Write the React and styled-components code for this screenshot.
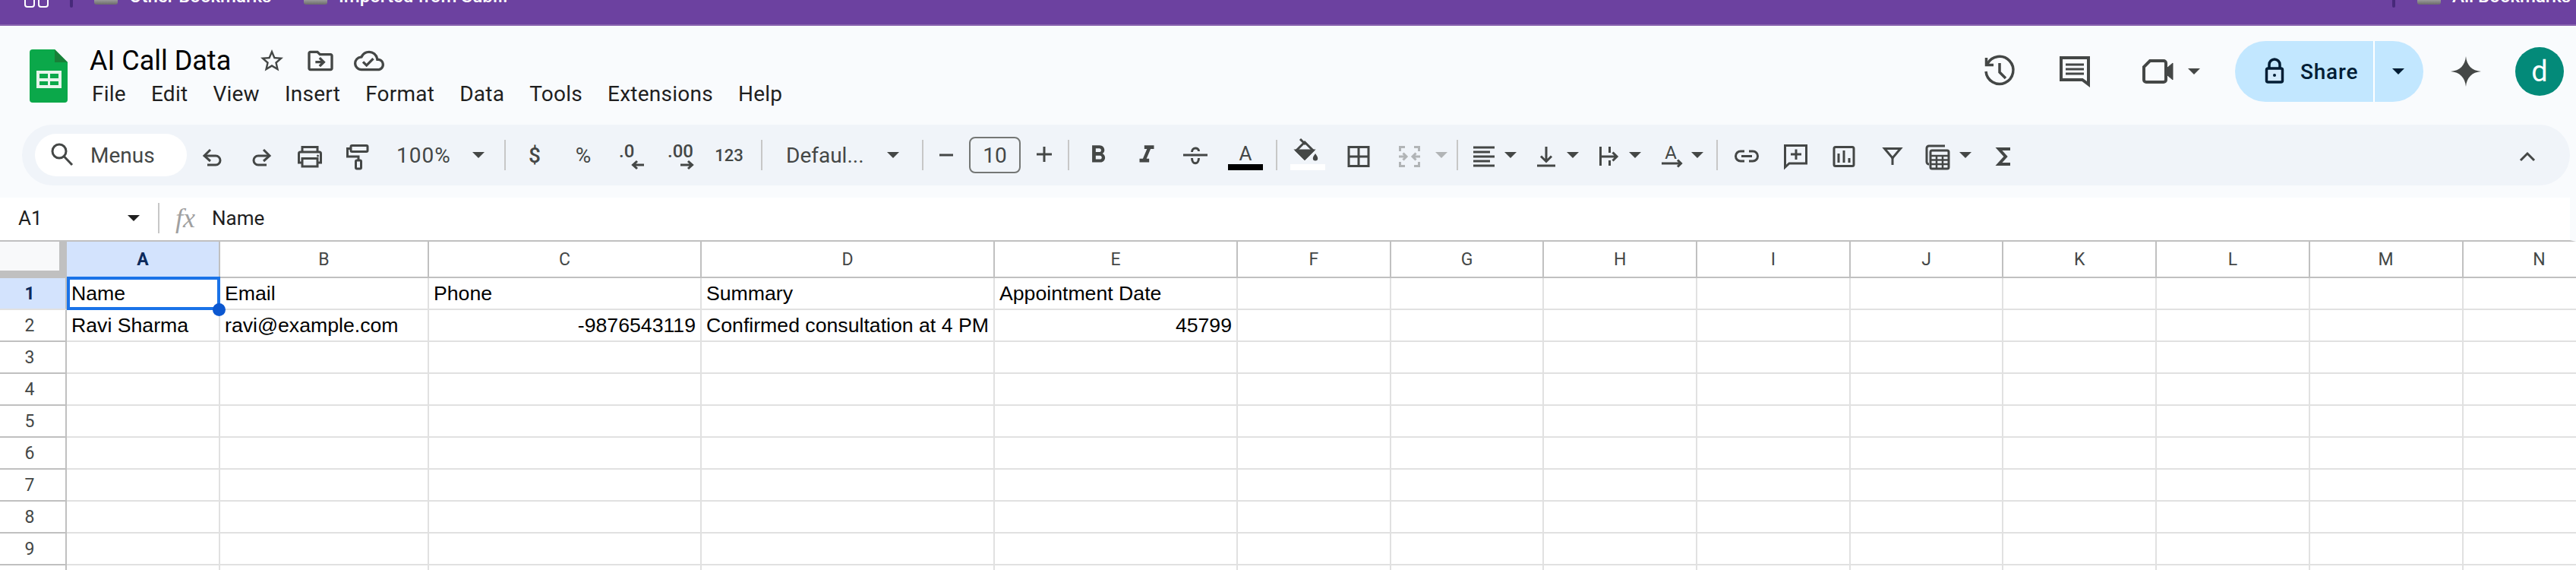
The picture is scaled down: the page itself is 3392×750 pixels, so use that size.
import React from 'react';
import styled, { createGlobalStyle } from 'styled-components';
import { MdStarBorder, MdOutlineDriveFileMove, MdOutlineCloudDone, MdFormatBold, MdFormatItalic } from 'react-icons/md';

const GlobalStyle = createGlobalStyle`
    html, body {
        margin: 0;
        padding: 0;
        width: 3392px;
        height: 750px;
        overflow: hidden;
        background: #fff;
        font-family: Roboto, "Liberation Sans", sans-serif;
    }
    * { box-sizing: border-box; }
`;

const Page = styled.div`
    width: 3392px;
    height: 750px;
    overflow: hidden;
    display: flex;
    flex-direction: column;
`;

/* browser bookmarks strip, only the bottom of it is in the shot */
const BookmarkBar = styled.div`
    height: 34px;
    flex: none;
    display: flex;
    align-items: flex-start;
    padding-left: 32px;
    overflow: hidden;
    background: #6c41a0;
    border-bottom: 2px solid #8a65b0;
`;
const BarDivider = styled.span`
    width: 4px;
    height: 10px;
    flex: none;
    margin-left: ${(p) => p.$ml || 0}px;
    border-radius: 0 0 2px 2px;
    background: #47297a;
`;
const BookmarkItem = styled.div`
    display: flex;
    align-items: flex-start;
    flex: none;
    gap: 15px;
    width: ${(p) => (p.$w ? `${p.$w}px` : 'auto')};
    margin-left: ${(p) => p.$ml || 0}px;
`;
const BookmarkFolder = styled.span`
    width: 31px;
    height: 6px;
    flex: none;
    border-radius: 0 0 3px 3px;
    background: linear-gradient(#9a9a9a, #6b6b6b);
`;
const BookmarkText = styled.span`
    margin-top: -18px;
    color: #fff;
    font-size: 24px;
    font-weight: 500;
    line-height: 26px;
    white-space: nowrap;
`;
const BarRight = styled.div`
    margin-left: auto;
    width: 242px;
    flex: none;
    display: flex;
    align-items: flex-start;
`;

const Header = styled.div`
    flex: none;
    height: 226px;
    background: #f9fbfd;
`;
const TopRow = styled.div`
    height: 130px;
    display: flex;
    align-items: flex-start;
    padding: 0 16px 0 39px;
`;
const Logo = styled.svg`
    width: 50px;
    height: 70px;
    flex: none;
    margin-top: 31px;
`;
const TitleBlock = styled.div`
    margin: 24px 0 0 29px;
`;
const TitleRow = styled.div`
    display: flex;
    align-items: center;
    height: 44px;
`;
const Title = styled.div`
    width: 208px;
    color: #000;
    font-size: 36px;
    line-height: 44px;
    white-space: nowrap;
`;
const TitleIcon = styled.span`
    width: 64px;
    display: flex;
    align-items: center;
    justify-content: center;
    color: #444746;
`;
const MenuBar = styled.div`
    display: flex;
    gap: 33px;
    margin: 4px 0 0 3px;
    color: #1f1f1f;
    font-size: 28px;
    letter-spacing: 0.25px;
    line-height: 36px;
`;
const HeaderRight = styled.div`
    margin-left: auto;
    margin-top: 20px;
    height: 80px;
    display: flex;
    align-items: center;
    color: #444746;
`;
const HeadIcon = styled.span`
    width: 48px;
    height: 48px;
    flex: none;
    display: flex;
    margin-left: ${(p) => p.$ml || 0}px;
`;
const SharePill = styled.div`
    width: 248px;
    height: 80px;
    flex: none;
    margin-left: ${(p) => p.$ml || 0}px;
    display: flex;
    border-radius: 40px;
    overflow: hidden;
    background: #c2e7ff;
    color: #001d35;
`;
const ShareMain = styled.div`
    width: 182px;
    display: flex;
    align-items: center;
    padding-left: 28px;
    gap: 10px;
    font-size: 28px;
    font-weight: 500;
    letter-spacing: 0.8px;
`;
const ShareMore = styled.div`
    flex: 1;
    display: flex;
    align-items: center;
    justify-content: center;
    padding-right: 2px;
    border-left: 2px solid #fff;
`;
const Avatar = styled.div`
    width: 64px;
    height: 64px;
    flex: none;
    margin-left: ${(p) => p.$ml || 0}px;
    display: flex;
    align-items: center;
    justify-content: center;
    border-radius: 50%;
    background: #038a79;
    color: #fff;
    font-size: 38px;
`;

const Toolbar = styled.div`
    height: 80px;
    margin: 0 8px 0 29px;
    padding: 0 24px 0 17px;
    display: flex;
    align-items: center;
    border-radius: 40px;
    background: #f0f4f9;
    color: #444746;
`;
const SearchPill = styled.div`
    width: 200px;
    height: 56px;
    flex: none;
    display: flex;
    align-items: center;
    padding-left: 10px;
    gap: 15px;
    margin-right: 2px;
    border-radius: 28px;
    background: #fff;
    font-size: 28px;
`;
const ToolButton = styled.div`
    width: ${(p) => p.$w || 64}px;
    height: 56px;
    flex: none;
    margin-left: ${(p) => p.$ml || 0}px;
    display: flex;
    align-items: center;
    justify-content: center;
    color: ${(p) => (p.$disabled ? '#b1b4b6' : 'inherit')};
    font-size: ${(p) => p.$size || 28}px;
    font-weight: ${(p) => p.$weight || 400};
`;
const TextSelect = styled.div`
    width: ${(p) => p.$w}px;
    height: 56px;
    flex: none;
    display: flex;
    align-items: center;
    justify-content: space-between;
    padding: 0 ${(p) => p.$pr}px 0 ${(p) => p.$pl}px;
    font-size: 28px;
    letter-spacing: ${(p) => p.$ls || 0}px;
    white-space: nowrap;
`;
const FontSizeBox = styled.div`
    width: 68px;
    height: 48px;
    flex: none;
    display: flex;
    align-items: center;
    justify-content: center;
    border: 2px solid #747775;
    border-radius: 8px;
    font-size: 28px;
`;
const Sep = styled.span`
    width: 2px;
    height: 40px;
    flex: none;
    margin: 0 ${(p) => p.$r || 0}px 0 ${(p) => p.$l || 0}px;
    background: #c7c7c7;
`;
const ToolbarSpacer = styled.span`
    flex: 1;
`;
const Caret = styled.span`
    width: 0;
    height: 0;
    flex: none;
    border-left: 8px solid transparent;
    border-right: 8px solid transparent;
    border-top: 8px solid ${(p) => p.$color || 'currentColor'};
`;
const CaretSlot = styled.span`
    width: ${(p) => p.$w || 18}px;
    flex: none;
    margin-left: ${(p) => p.$ml || 0}px;
    margin-right: ${(p) => p.$mr || 0}px;
    display: flex;
    justify-content: center;
`;
const Icon = styled.svg.attrs({ viewBox: '0 0 48 48', width: 48, height: 48, fill: 'none' })`
    flex: none;
    display: block;
    overflow: visible;
    stroke: currentColor;
    stroke-width: ${(p) => p.$sw || 3};
`;
const IconLabel = styled.text`
    fill: currentColor;
    stroke: none;
    font-family: Roboto, sans-serif;
    font-size: ${(p) => p.$size || 24}px;
    font-weight: ${(p) => p.$weight || 400};
`;

const FormulaBar = styled.div`
    flex: none;
    height: 58px;
    display: flex;
    align-items: center;
    padding-bottom: 2px;
    background: #fff;
    border-bottom: 2px solid #c0c0c0;
    border-right: 8px solid #f9fbfd;
`;
const NameBox = styled.div`
    width: 208px;
    flex: none;
    padding: 0 24px;
    display: flex;
    align-items: center;
    justify-content: space-between;
    color: #1f1f1f;
    font-size: 26px;
`;
const Fx = styled.span`
    margin-left: 21px;
    width: 48px;
    color: #a0a0a0;
    font-family: "Liberation Serif", serif;
    font-size: 36px;
    font-style: italic;
    line-height: 1;
`;
const FormulaText = styled.span`
    color: #1f1f1f;
    font-size: 26px;
`;

const Sheet = styled.div`
    flex: 1;
    overflow: hidden;
    display: grid;
    grid-template-columns: 88px 202px 275px 359px 386px 320px repeat(9, 201.7px);
    grid-auto-rows: 42px;
    grid-template-rows: 48px;
`;
const Corner = styled.div`
    background: #f8f9fa;
    border-right: 10px solid #c0c0c0;
    border-bottom: 10px solid #c0c0c0;
`;
const ColHead = styled.div`
    display: flex;
    align-items: center;
    justify-content: center;
    background: ${(p) => (p.$active ? '#d3e3fd' : '#fff')};
    color: ${(p) => (p.$active ? '#0b2a5c' : '#444746')};
    font-size: 23px;
    font-weight: ${(p) => (p.$active ? 700 : 400)};
    border-right: 2px solid #c0c0c0;
    border-bottom: 2px solid #c0c0c0;
`;
const RowHead = styled.div`
    display: flex;
    align-items: center;
    justify-content: center;
    padding-right: 8px;
    background: ${(p) => (p.$active ? '#d3e3fd' : '#fff')};
    color: ${(p) => (p.$active ? '#0b2a5c' : '#444746')};
    font-size: 23px;
    font-weight: ${(p) => (p.$active ? 700 : 400)};
    border-right: 2px solid #c0c0c0;
    border-bottom: 2px solid ${(p) => (p.$active ? '#e1e1e1' : '#c0c0c0')};
`;
const Cell = styled.div`
    position: relative;
    padding: 0 6px;
    overflow: visible;
    color: #000;
    font-family: "Liberation Sans", Arial, sans-serif;
    font-size: 26.67px;
    line-height: 40px;
    text-align: ${(p) => (p.$right ? 'right' : 'left')};
    white-space: nowrap;
    border-right: 2px solid #e1e1e1;
    border-bottom: 2px solid #e1e1e1;

    ${(p) => p.$selected && `
        z-index: 2;
        &::before {
            content: '';
            position: absolute;
            top: -2px;
            left: 0;
            right: -2px;
            bottom: -2px;
            border: 4px solid #1a73e8;
        }
        &::after {
            content: '';
            position: absolute;
            right: -9px;
            bottom: -10px;
            width: 17px;
            height: 17px;
            border-radius: 50%;
            background: #0b57d0;
        }
    `}
`;

const MENUS = ['File', 'Edit', 'View', 'Insert', 'Format', 'Data', 'Tools', 'Extensions', 'Help'];
const COLUMNS = 'ABCDEFGHIJKLMN'.split('');
const ROWS = [
    [{ text: 'Name', selected: true }, { text: 'Email' }, { text: 'Phone' }, { text: 'Summary' }, { text: 'Appointment Date' }],
    [{ text: 'Ravi Sharma' }, { text: 'ravi@example.com' }, { text: '-9876543119', right: true }, { text: 'Confirmed consultation at 4 PM' }, { text: '45799', right: true }],
];

const App = () => {
    const rowNumbers = [1, 2, 3, 4, 5, 6, 7, 8, 9, 10];
    return (
        <Page>
            <GlobalStyle />
            <BookmarkBar>
                <svg width="32" height="10" viewBox="0 0 32 10" fill="none" stroke="#fff" strokeWidth="2">
                    <rect x="1" y="-10" width="12" height="19" rx="3" />
                    <rect x="19" y="-10" width="12" height="19" rx="3" />
                </svg>
                <BarDivider $ml={28} />
                <BookmarkItem $w={276} $ml={28}>
                    <BookmarkFolder />
                    <BookmarkText>Other Bookmarks</BookmarkText>
                </BookmarkItem>
                <BookmarkItem>
                    <BookmarkFolder />
                    <BookmarkText>Imported from Sub...</BookmarkText>
                </BookmarkItem>
                <BarRight>
                    <BarDivider />
                    <BookmarkItem $ml={29}>
                        <BookmarkFolder />
                        <BookmarkText>All Bookmarks</BookmarkText>
                    </BookmarkItem>
                </BarRight>
            </BookmarkBar>

            <Header>
                <TopRow>
                    <Logo viewBox="0 0 50 70">
                        <path d="M4 0H33L50 17V66a4 4 0 0 1-4 4H4a4 4 0 0 1-4-4V4a4 4 0 0 1 4-4z" fill="#0ba84a" />
                        <path d="M33 0L50 17H33z" fill="#188038" />
                        <path d="M9 28H42V51H9z" fill="#e8f5ec" />
                        <path d="M13 32H24V38H13zM27 32H38V38H27zM13 42H24V47H13zM27 42H38V47H27z" fill="#0ba84a" />
                    </Logo>
                    <TitleBlock>
                        <TitleRow>
                            <Title>AI Call Data</Title>
                            <TitleIcon><MdStarBorder size={36} /></TitleIcon>
                            <TitleIcon><MdOutlineDriveFileMove size={40} /></TitleIcon>
                            <TitleIcon><MdOutlineCloudDone size={40} /></TitleIcon>
                        </TitleRow>
                        <MenuBar>
                            {MENUS.map((m) => <span key={m}>{m}</span>)}
                        </MenuBar>
                    </TitleBlock>
                    <HeaderRight>
                        <HeadIcon>
                            <Icon $sw={3.5}>
                                <path d="M8 14A18 18 0 1 1 6 24" />
                                <path d="M6.5 6V15.5H16" />
                                <path d="M24 13V25L32 33" />
                            </Icon>
                        </HeadIcon>
                        <HeadIcon $ml={51}>
                            <Icon $sw={4}>
                                <path d="M6 6H42V41L34 35H6Z" />
                                <path d="M12 15H36M12 21H36M12 27H36" strokeWidth="3" />
                            </Icon>
                        </HeadIcon>
                        <HeadIcon $ml={61}>
                            <Icon $sw={4}>
                                <path d="M14 10H32a3 3 0 0 1 3 3V35a3 3 0 0 1-3 3H9a3 3 0 0 1-3-3V18Z" />
                                <path d="M37 19L44 13V35L37 29Z" fill="currentColor" strokeWidth="1" />
                            </Icon>
                        </HeadIcon>
                        <CaretSlot $w={16} $ml={16}><Caret /></CaretSlot>
                        <SharePill $ml={46}>
                            <ShareMain>
                                <Icon $sw={3.5}>
                                    <rect x="13.5" y="20" width="21" height="18" rx="2" fill="#d3e9fb" />
                                    <path d="M17 20V15a7 7 0 0 1 14 0V20" />
                                    <circle cx="24" cy="29" r="2" fill="currentColor" stroke="none" />
                                </Icon>
                                Share
                            </ShareMain>
                            <ShareMore><Caret /></ShareMore>
                        </SharePill>
                        <HeadIcon $ml={32}>
                            <Icon>
                                <path d="M24 4C25 16 32 23 44 24C32 25 25 32 24 44C23 32 16 25 4 24C16 23 23 16 24 4Z" fill="currentColor" stroke="none" />
                            </Icon>
                        </HeadIcon>
                        <Avatar $ml={41}>d</Avatar>
                    </HeaderRight>
                </TopRow>

                <Toolbar>
                    <SearchPill>
                        <Icon>
                            <circle cx="22" cy="19" r="9" />
                            <path d="M28.5 26L39 37" />
                        </Icon>
                        Menus
                    </SearchPill>
                    <ToolButton>
                        <Icon>
                            <path d="M21 17L13 25L21 32" />
                            <path d="M13 25H28a6 6 0 0 1 0 12H17" />
                        </Icon>
                    </ToolButton>
                    <ToolButton>
                        <Icon>
                            <path d="M27 17L35 25L27 32" />
                            <path d="M35 25H20a6 6 0 0 0 0 12H31" />
                        </Icon>
                    </ToolButton>
                    <ToolButton>
                        <Icon>
                            <path d="M14 20V13.5H34V20" />
                            <path d="M14 34H9.5V22a2 2 0 0 1 2-2H36.5a2 2 0 0 1 2 2V34H34" />
                            <path d="M14 28.5H34V39H14Z" />
                            <circle cx="34.5" cy="25" r="1.5" fill="currentColor" stroke="none" />
                        </Icon>
                    </ToolButton>
                    <ToolButton>
                        <Icon>
                            <rect x="14" y="11.5" width="22" height="8" rx="1.5" />
                            <path d="M14 15.5H9.5V26H24V31" />
                            <rect x="20.5" y="31" width="7" height="11" rx="1.5" />
                        </Icon>
                    </ToolButton>
                    <TextSelect $w={152} $pl={18} $pr={18} $ls={1}>
                        100%
                        <Caret />
                    </TextSelect>
                    <Sep $l={8} $r={6} />
                    <ToolButton $weight={500}>$</ToolButton>
                    <ToolButton>%</ToolButton>
                    <ToolButton>
                        <Icon>
                            <IconLabel x="7" y="27" $weight={500}>.0</IconLabel>
                            <path d="M40 37H26M31 32L25.5 37L31 42" />
                        </Icon>
                    </ToolButton>
                    <ToolButton>
                        <Icon>
                            <IconLabel x="7" y="27" $weight={500}>.00</IconLabel>
                            <path d="M24 37H39M34 32L39.5 37L34 42" />
                        </Icon>
                    </ToolButton>
                    <ToolButton $size={22} $weight={500}>123</ToolButton>
                    <Sep $l={10} $r={8} />
                    <TextSelect $w={194} $pl={23} $pr={22}>
                        Defaul...
                        <Caret />
                    </TextSelect>
                    <Sep $l={8} />
                    <ToolButton $w={60}>
                        <Icon><path d="M15 24H33" /></Icon>
                    </ToolButton>
                    <FontSizeBox>10</FontSizeBox>
                    <ToolButton $w={58}>
                        <Icon><path d="M16 23H36M26 13V33" /></Icon>
                    </ToolButton>
                    <Sep $l={4} $r={6} />
                    <ToolButton><MdFormatBold size={38} /></ToolButton>
                    <ToolButton><MdFormatItalic size={38} /></ToolButton>
                    <ToolButton>
                        <Icon>
                            <path d="M8 24H40" />
                            <path d="M19.5 20c0-6.5 9-6.5 9-1M19.5 28c0 9 9 9 9 0" />
                        </Icon>
                    </ToolButton>
                    <ToolButton $w={68}>
                        <Icon>
                            <IconLabel x="24" y="31" textAnchor="middle" $size={26}>A</IconLabel>
                            <rect x="1" y="36" width="46" height="8" fill="#000" stroke="none" />
                        </Icon>
                    </ToolButton>
                    <Sep $l={6} $r={8} />
                    <ToolButton>
                        <Icon>
                            <path d="M14 3L21 10" />
                            <path d="M20 7L31 18L20 29L9 18Z" />
                            <path d="M9 18H31L20 29Z" fill="currentColor" />
                            <path d="M34 22c-2 3-3.2 4.5-3.2 6.2a3.2 3.2 0 0 0 6.4 0c0-1.700-1.2-3.2-3.2-6.2z" fill="currentColor" stroke="none" />
                            <rect x="1" y="36" width="46" height="8" fill="#fff" stroke="none" />
                        </Icon>
                    </ToolButton>
                    <ToolButton $ml={3}>
                        <Icon>
                            <rect x="11" y="13.5" width="26" height="25" />
                            <path d="M24 13.5V38.5M11 26H37" />
                        </Icon>
                    </ToolButton>
                    <ToolButton $ml={3} $disabled>
                        <Icon>
                            <path d="M18 13.5H11.5V19M30 13.5H36.5V19M18 38.5H11.5V33M30 38.5H36.5V33" />
                            <path d="M10 26H20M15.5 21.5L20 26L15.5 30.5M38 26H28M32.5 21.5L28 26L32.5 30.5" />
                        </Icon>
                    </ToolButton>
                    <CaretSlot $w={24} $ml={-2}><Caret $color="#b1b4b6" /></CaretSlot>
                    <Sep $l={8} $r={8} />
                    <ToolButton $w={52}>
                        <Icon>
                            <path d="M10 14H38M10 20H32M10 26H38M10 32H32M10 38H38" />
                        </Icon>
                    </ToolButton>
                    <CaretSlot $mr={12}><Caret /></CaretSlot>
                    <ToolButton $w={52}>
                        <Icon>
                            <path d="M12 38H36M24 13V32M17 25.5L24 32.5L31 25.5" />
                        </Icon>
                    </ToolButton>
                    <CaretSlot $mr={12}><Caret /></CaretSlot>
                    <ToolButton $w={52}>
                        <Icon>
                            <path d="M13.5 13V38M25.5 13V21M25.5 31V38M13.5 26H35M29.5 20.5L35 26L29.5 31.5" />
                        </Icon>
                    </ToolButton>
                    <CaretSlot $mr={12}><Caret /></CaretSlot>
                    <ToolButton $w={52}>
                        <Icon>
                            <IconLabel x="24" y="29" textAnchor="middle">A</IconLabel>
                            <path d="M12 35H37M33 30.5L37.5 35L33 39.5" />
                        </Icon>
                    </ToolButton>
                    <CaretSlot><Caret /></CaretSlot>
                    <Sep $l={16} $r={6} />
                    <ToolButton>
                        <Icon>
                            <path d="M21 19H16a6.5 6.5 0 0 0 0 13H21M27 19H32a6.5 6.5 0 0 1 0 13H27M17 25.5H31" />
                        </Icon>
                    </ToolButton>
                    <ToolButton>
                        <Icon>
                            <path d="M10.5 40V11.5H38.5V35H16Z" />
                            <path d="M25 16.5V30M18 23H32" />
                        </Icon>
                    </ToolButton>
                    <ToolButton>
                        <Icon>
                            <rect x="11" y="13.5" width="26" height="25" rx="2" />
                            <path d="M17 22V34M24 18V34M31 28V34" />
                        </Icon>
                    </ToolButton>
                    <ToolButton>
                        <Icon>
                            <path d="M13.5 15.5H34.5L24 28Z" />
                            <path d="M24 28V37" />
                        </Icon>
                    </ToolButton>
                    <ToolButton $w={54}>
                        <Icon>
                            <path d="M34 12H13a3 3 0 0 0-3 3V33a3 3 0 0 0 3 3" />
                            <rect x="15" y="18" width="24" height="24" rx="2" />
                            <path d="M15 25H39M15 30.5H39M15 36H39M23 25V42M31 25V42" strokeWidth="2.5" />
                        </Icon>
                    </ToolButton>
                    <CaretSlot $w={20}><Caret /></CaretSlot>
                    <ToolButton $ml={9}>
                        <Icon $sw={4}>
                            <path d="M32 16H17L26 26L17 36H32" />
                        </Icon>
                    </ToolButton>
                    <ToolbarSpacer />
                    <ToolButton>
                        <Icon>
                            <path d="M15 31L24 22L33 31" />
                        </Icon>
                    </ToolButton>
                </Toolbar>
            </Header>

            <FormulaBar>
                <NameBox>
                    A1
                    <Caret />
                </NameBox>
                <Sep />
                <Fx>fx</Fx>
                <FormulaText>Name</FormulaText>
            </FormulaBar>

            <Sheet>
                <Corner />
                {COLUMNS.map((c) => <ColHead key={c} $active={c === 'A'}>{c}</ColHead>)}
                {rowNumbers.map((n) => (
                    <React.Fragment key={n}>
                        <RowHead $active={n === 1}>{n}</RowHead>
                        {COLUMNS.map((c, i) => {
                            const cell = (ROWS[n - 1] && ROWS[n - 1][i]) || {};
                            return <Cell key={c} $right={cell.right} $selected={cell.selected}>{cell.text}</Cell>;
                        })}
                    </React.Fragment>
                ))}
            </Sheet>
        </Page>
    );
};

export default App;
